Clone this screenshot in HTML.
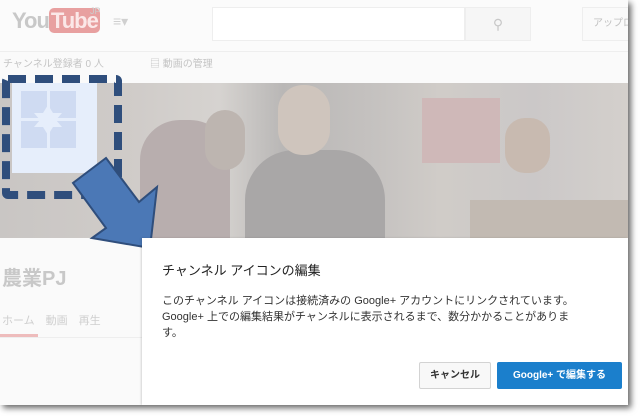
<!DOCTYPE html>
<html><head><meta charset="utf-8"><style>
*{margin:0;padding:0;box-sizing:border-box}
body{width:640px;height:416px;background:#fff;position:relative;overflow:hidden;font-family:"Liberation Sans","Noto Sans CJK JP",sans-serif}
.page{position:absolute;left:0;top:0;width:628px;height:405px;background:#fafafa;box-shadow:3px 3px 6px rgba(0,0,0,.6);overflow:hidden}
.abs{position:absolute}
</style></head><body>
<div class="page">
 <div class="abs" style="left:0;top:0;width:628px;height:52px;background:#fbfbfb;border-bottom:1px solid #eee"></div>
 <div class="abs" style="left:12px;top:8px;font:bold 22px 'Liberation Sans',sans-serif;color:#c8c8c8;letter-spacing:-1px">You<span style="background:#e8a0a0;color:#fbe8e8;border-radius:5px;padding:0 2px">Tube</span></div>
 <div class="abs" style="left:90px;top:6px;font-size:9px;color:#ccc">JP</div>
 <div class="abs" style="left:113px;top:13px;font-size:14px;color:#d0d0d0">≡▾</div>
 <div class="abs" style="left:212px;top:7px;width:253px;height:34px;background:#fff;border:1px solid #eee"></div>
 <div class="abs" style="left:465px;top:7px;width:66px;height:34px;background:#f6f6f6;border:1px solid #eee;color:#c8c8c8;text-align:center;line-height:32px;font-size:14px">⚲</div>
 <div class="abs" style="left:582px;top:7px;width:60px;height:34px;background:#fafafa;border:1px solid #eee;color:#c0c0c0;font-size:10px;line-height:32px;padding-left:10px">アップロ</div>
 <div class="abs" style="left:3px;top:55px;font-size:10px;color:#c4c4c4">チャンネル登録者 0 人</div>
 <div class="abs" style="left:150px;top:55px;font-size:10px;color:#c4c4c4">▤ 動画の管理</div>
 <!-- photo -->
 <div class="abs" style="left:0;top:83px;width:628px;height:155px;background:linear-gradient(90deg,#c9c6c4 0%,#cfcbc8 20%,#d6d3d0 35%,#b9b7b6 45%,#c5c2c0 60%,#d0ccc8 70%,#cbc8c8 85%,#d4d0cc 100%)"></div>
 <div class="abs" style="left:140px;top:120px;width:90px;height:118px;background:#b8aeae;border-radius:40px 40px 0 0"></div>
 <div class="abs" style="left:245px;top:150px;width:140px;height:88px;background:#a9a7a7;border-radius:50px 50px 0 0"></div>
 <div class="abs" style="left:278px;top:85px;width:52px;height:70px;background:#cfc5bd;border-radius:25px"></div>
 <div class="abs" style="left:205px;top:110px;width:40px;height:60px;background:#bdb5b0;border-radius:20px"></div>
 <div class="abs" style="left:422px;top:98px;width:78px;height:65px;background:#cfb8b8"></div>
 <div class="abs" style="left:470px;top:200px;width:158px;height:38px;background:#c2bab2"></div>
 <div class="abs" style="left:505px;top:118px;width:45px;height:55px;background:#c8bab0;border-radius:20px"></div>
 <!-- avatar -->
 <div class="abs" style="left:12px;top:83px;width:85px;height:90px;background:#e6eefb"></div>
 <svg class="abs" style="left:0;top:0" width="628" height="405">
  <rect x="21" y="91" width="26" height="27" fill="#cfdbf2"/><rect x="50" y="91" width="26" height="27" fill="#cfdbf2"/>
  <rect x="21" y="121" width="26" height="27" fill="#cfdbf2"/><rect x="50" y="121" width="26" height="27" fill="#cfdbf2"/>
  <polygon points="48,105 53,113 62,113 56,120 62,127 53,127 48,135 43,127 34,127 40,120 34,113 43,113" fill="#e6eefb"/>
  <rect x="6" y="79" width="112" height="116" fill="none" stroke="#2f4e7c" stroke-width="8" stroke-dasharray="18 9" rx="2"/>
  <polygon points="106,158 139,202 157,187 150,248 92,238 106,228 73,183" fill="#4b78b6" stroke="#2f4e7c" stroke-width="2"/>
 </svg>
 <div class="abs" style="left:2px;top:262px;font-size:20px;color:#c8c8c8;font-weight:bold">農業PJ</div>
 <div class="abs" style="left:2px;top:312px;font-size:11px;color:#cfcfcf;word-spacing:16px">ホーム　動画　再生</div>
 <div class="abs" style="left:0;top:334px;width:38px;height:3px;background:#eebcbc"></div>
 <div class="abs" style="left:0;top:337px;width:142px;height:1px;background:#eee"></div>
 <!-- dialog -->
 <div class="abs" style="left:142px;top:238px;width:486px;height:167px;background:#fff;box-shadow:-1px 0 2px rgba(0,0,0,.15)">
  <div class="abs" style="left:20px;top:22px;font-size:13px;color:#222">チャンネル アイコンの編集</div>
  <div class="abs" style="left:20px;top:55px;width:470px;font-size:11px;line-height:16px;color:#333;white-space:nowrap">このチャンネル アイコンは接続済みの Google+ アカウントにリンクされています。<br>Google+ 上での編集結果がチャンネルに表示されるまで、数分かかることがありま<br>す。</div>
  <div class="abs" style="left:277px;top:124px;width:72px;height:27px;background:#f8f8f8;border:1px solid #d3d3d3;border-radius:2px;font-size:10px;font-weight:bold;color:#333;text-align:center;line-height:25px">キャンセル</div>
  <div class="abs" style="left:355px;top:124px;width:125px;height:27px;background:#1b7fcc;border-radius:2px;font-size:10px;font-weight:bold;color:#fff;text-align:center;line-height:27px">Google+ で編集する</div>
 </div>
</div>
</body></html>
